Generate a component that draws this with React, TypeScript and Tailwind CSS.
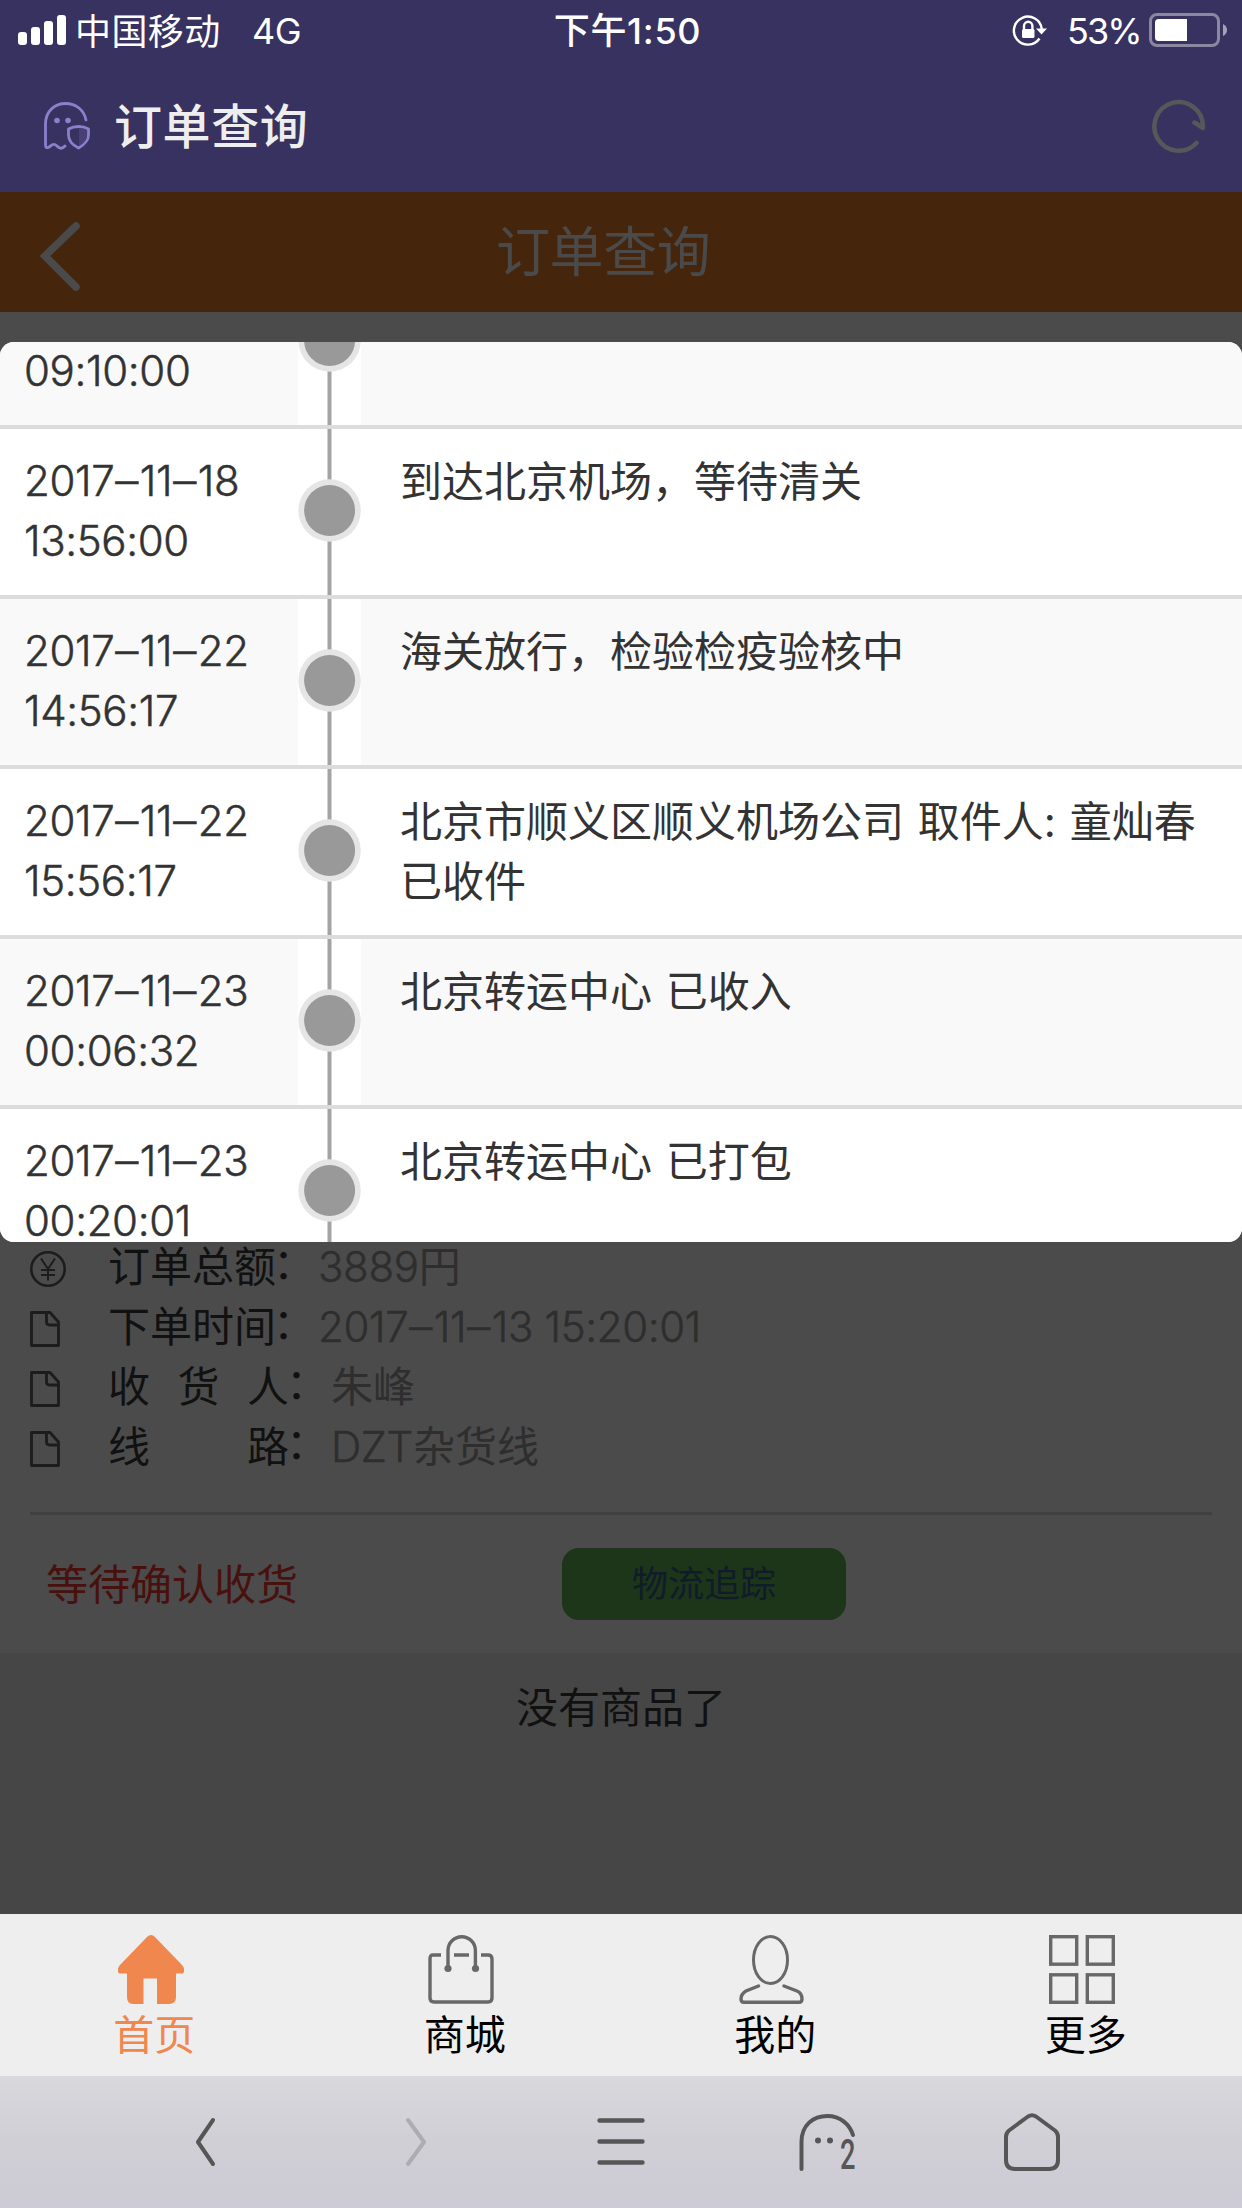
import React from "react";

const SANS = "font-['Inter','Noto_Sans_CJK_SC',sans-serif]";

type Step = { date: string; time: string; text: string };

const steps: Step[] = [
  { date: "2017–11–18", time: "13:56:00", text: "到达北京机场，等待清关" },
  { date: "2017–11–22", time: "14:56:17", text: "海关放行，检验检疫验核中" },
  { date: "2017–11–22", time: "15:56:17", text: "北京市顺义区顺义机场公司 取件人: 童灿春 已收件" },
  { date: "2017–11–23", time: "00:06:32", text: "北京转运中心 已收入" },
  { date: "2017–11–23", time: "00:20:01", text: "北京转运中心 已打包" },
];

function StatusBar() {
  return (
    <div className="flex h-[60px] items-center text-[36px] leading-[60px] text-white">
      <div className="flex w-[410px] items-center pl-[18px]">
        <div className="flex h-[30px] items-end gap-1">
          <span className="h-[13px] w-[9px] rounded-[3px] bg-white" />
          <span className="h-[18px] w-[9px] rounded-[3px] bg-white" />
          <span className="h-[24px] w-[9px] rounded-[3px] bg-white" />
          <span className="h-[30px] w-[9px] rounded-[3px] bg-white" />
        </div>
        <span className="ml-[9px] w-[177px] pt-[3px] tracking-[0.4px]">中国移动</span>
        <span className="pt-[2px] tracking-[-0.5px]">4G</span>
      </div>
      <div className="w-[435px] pt-[2px] text-center font-medium tracking-[0.7px]">下午1:50</div>
      <div className="flex flex-1 items-center justify-end pr-[15px]">
        <svg width="36" height="32" viewBox="0 0 36 32" fill="none" stroke="#fff" strokeWidth="2.4">
          <path d="M27.5 24.5A14 14 0 1 1 29.8 15" />
          <path d="M24 14.5h11l-5.500 6z" fill="#fff" stroke="none" />
          <rect x="10" y="15" width="12.500" height="9" rx="1.500" fill="#fff" stroke="none" />
          <path d="M12 15.500v-3.500a4.200 4.200 0 0 1 8.400 0v3.500" />
        </svg>
        <span className="ml-[19px] w-[74px] pt-[2px] tracking-[-1.9px]">53%</span>
        <svg className="ml-[8px]" width="78" height="34" viewBox="0 0 78 34">
          <rect x="1.500" y="1.500" width="68" height="31" rx="6.500" fill="none" stroke="#8b87a3" strokeWidth="3" />
          <path d="M9.500 6H38v22H9.500A3.500 3.500 0 0 1 6 24.500v-15A3.500 3.500 0 0 1 9.500 6z" fill="#fff" />
          <path d="M74 11q4 2 4 6t-4 6z" fill="#a5a2b8" />
        </svg>
      </div>
    </div>
  );
}

function BrowserHeader() {
  return (
    <div className="flex h-[132px] items-center pl-[43px] pr-[36px]">
      <svg width="48" height="50" viewBox="0 0 48 50" fill="none" stroke="#8b80cc" strokeWidth="2.800" strokeLinecap="round" strokeLinejoin="round">
        <path d="M22 45q-4 4.500-8 0q-3.500-3.500-7 .5q-4.500 3-4.500-1.500V23C2.500 10 12 2.500 22.500 2.500C33 2.500 41 9 43 19" />
        <path d="M35.500 25.500q-5.500 0-10 2.500v6q0 8 10 13q10-6 10-13v-6q-4.500-2.500-10-2.500z" />
        <path d="M36 27q5 .5 8 2v5q0 7-8 11z" fill="#494176" stroke="none" />
        <circle cx="14" cy="19.500" r="2.800" fill="#8b80cc" stroke="none" />
        <circle cx="25" cy="19.500" r="2.800" fill="#8b80cc" stroke="none" />
      </svg>
      <h1 className="ml-[23px] flex-1 pt-[2px] text-[48px] font-medium leading-[60px] tracking-[0.6px] text-[#eeeeee]">订单查询</h1>
      <svg width="56" height="56" viewBox="0 0 56 56" fill="none" stroke="#575759" strokeWidth="4.500" strokeLinecap="round" strokeLinejoin="round">
        <path d="M46.500 45A24.300 24.300 0 1 1 53 27.500V30L44.500 24.500" />
      </svg>
    </div>
  );
}

function PageTitle() {
  return (
    <div className="flex h-[120px] items-center bg-[#45260d] pl-[38px]">
      <svg className="mt-[8px]" width="44" height="72" viewBox="0 0 44 72" fill="none" stroke="#4a4a4a" strokeWidth="7.500" strokeLinecap="round">
        <path d="M38 6L7 36L38 67" />
      </svg>
      <h2 className="ml-[414px] pt-px text-[54px] leading-[60px] tracking-[-0.4px] text-[#4a4a4a]">订单查询</h2>
    </div>
  );
}

/** Latin digits with wide dashes, as used in dates and times. */
function Stamp({ value }: { value: string }) {
  return (
    <span className="font-light tracking-[-0.35px] [-webkit-text-stroke:0.5px_currentColor]">
      {value.split(/(–)/).map((part, i) =>
        part === "–" ? (
          <span key={i} className="inline-block w-[25.500px] scale-x-110 text-center tracking-normal">
            –
          </span>
        ) : (
          part
        ),
      )}
    </span>
  );
}

function Node() {
  return (
    <svg className="shrink-0 bg-white" width="63" height="166" viewBox="0 0 63 166">
      <rect x="29.500" y="0" width="4" height="166" fill="#a3a3a3" />
      <circle cx="31.600" cy="81.500" r="31.200" fill="#e5e5e5" />
      <circle cx="31.600" cy="81.500" r="25.500" fill="#999999" />
    </svg>
  );
}

function StepRow({ step, shaded }: { step: Step; shaded: boolean }) {
  return (
    <li className={"flex h-[170px] shrink-0 border-b-4 border-[#dcdcdc] " + (shaded ? "bg-[#f9f9f9]" : "bg-white")}>
      <div className="w-[298px] shrink-0 whitespace-nowrap pl-[24px] pt-[22px]">
        <div>
          <Stamp value={step.date} />
        </div>
        <div>
          <Stamp value={step.time} />
        </div>
      </div>
      <Node />
      <div className="w-[845px] pl-[39px] pt-[23px] [word-spacing:2px]">{step.text}</div>
    </li>
  );
}

function TrackingCard() {
  return (
    <ul className="flex h-[900px] flex-col overflow-hidden rounded-[14px] bg-white text-[42px] leading-[60px] text-[#333333]">
      <li className="flex h-[87px] shrink-0 items-end overflow-hidden border-b-4 border-[#dcdcdc] bg-[#f9f9f9]">
        <div className="w-[298px] shrink-0 pb-[24px] pl-[24px]">
          <Stamp value="09:10:00" />
        </div>
        <Node />
      </li>
      {steps.map((step, i) => (
        <StepRow key={i} step={step} shaded={i % 2 === 1} />
      ))}
    </ul>
  );
}

function YenIcon() {
  return (
    <svg width="38" height="38" viewBox="0 0 38 38" fill="none" stroke="#1c1c1c" strokeWidth="2.600">
      <circle cx="18" cy="19" r="16.700" />
      <path d="M11 8.500l7 10.500l7-10.500M18 19v11.500M11 20h14M11 25h14" strokeWidth="2" />
    </svg>
  );
}

function FileIcon() {
  return (
    <svg width="32" height="38" viewBox="0 0 32 38" fill="none" stroke="#1c1c1c" strokeWidth="2.800" strokeLinejoin="round">
      <path d="M1.500 2.500H20L28.500 12V35.500H1.500zM16.500 2.500V12q0 3 3 3H28.500" />
    </svg>
  );
}

function DetailRow({ icon, chars, wide, children }: { icon: React.ReactNode; chars: string[]; wide?: boolean; children: React.ReactNode }) {
  return (
    <div className="flex h-[60px] items-center">
      <div className="flex w-[78px] pt-[6px]">{icon}</div>
      <div className={"flex justify-between pt-[2px] " + (wide ? "w-[181px]" : "w-[168px]")}>
        {chars.map((c) => (
          <span key={c}>{c}</span>
        ))}
      </div>
      <span className="-ml-[3px] -mt-[4px] w-[45px]">：</span>
      <span className="pt-px text-[#2e2e2e]">{children}</span>
    </div>
  );
}

function OrderDetails() {
  return (
    <div className="h-[411px] bg-[#4b4b4b] px-[30px] text-[42px] leading-[60px] text-[#111111]">
      <div className="-mt-[6px] pb-[36px]">
        <DetailRow icon={<YenIcon />} chars={["订", "单", "总", "额"]}>
          <Stamp value="3889" />円
        </DetailRow>
        <DetailRow icon={<FileIcon />} chars={["下", "单", "时", "间"]}>
          <Stamp value="2017–11–13 15:20:01" />
        </DetailRow>
        <DetailRow icon={<FileIcon />} chars={["收", "货", "人"]} wide>
          朱峰
        </DetailRow>
        <DetailRow icon={<FileIcon />} chars={["线", "路"]} wide>
          <Stamp value="DZT" />杂货线
        </DetailRow>
      </div>
      <div className="flex h-[108px] items-end border-t-[3px] border-[#404040] pl-[16px]">
        <span className="mb-[5px] w-[516px] text-[#48110d]">等待确认收货</span>
        <button className="h-[72px] w-[284px] rounded-[17px] bg-[#1d3519] text-[36px] leading-[73px] text-[#101c2a]">物流追踪</button>
      </div>
    </div>
  );
}

function TabBar() {
  const line = { fill: "none", stroke: "#686868", strokeWidth: 3.4 };
  const tabs = [
    {
      label: "首页",
      color: "text-[#f0874f]",
      icon: (
        <path d="M29 2Q33 -2 37 2L64 30Q68 35 65 38.500H58V62Q58 69 51 69H39V43.500H25.500V69H15Q9 69 9 62V38.500H1Q-2 35 2 30z" fill="#f0874f" />
      ),
    },
    {
      label: "商城",
      color: "text-black",
      icon: (
        <g {...line}>
          <path d="M13 20H5Q2 20 2 24V63Q2 67 6 67H60Q64 67 64 63V24Q64 20 60 20H53M26 20H41" />
          <path d="M20 33V15.500a13.700 13.700 0 0 1 27.400 0V33" />
          <circle cx="20" cy="33.500" r="3.600" fill="#686868" stroke="none" />
          <circle cx="47.500" cy="33.500" r="3.600" fill="#686868" stroke="none" />
        </g>
      ),
    },
    {
      label: "我的",
      color: "text-black",
      icon: (
        <g {...line} strokeLinecap="round">
          <ellipse cx="31.500" cy="25" rx="17" ry="23.500" strokeWidth="3" />
          <path d="M19.500 51L7 56Q2 59 2 64Q2 67.300 5 67.300H60Q63 67.300 63 64Q63 58 58 56L45 51" />
        </g>
      ),
    },
    {
      label: "更多",
      color: "text-black",
      icon: (
        <g {...line}>
          <rect x="1.700" y="1.700" width="26" height="27.500" />
          <rect x="38.300" y="1.700" width="26" height="27.500" />
          <rect x="1.700" y="39.800" width="26" height="27.500" />
          <rect x="38.300" y="39.800" width="26" height="27.500" />
        </g>
      ),
    },
  ];
  return (
    <nav className="grid h-[162px] grid-cols-4 bg-[#eeeeee] text-[41px] leading-[60px]">
      {tabs.map((t) => (
        <div key={t.label} className="flex flex-col items-center pt-[21px]">
          <svg className="mr-[9px] shrink-0" width="66" height="69" viewBox="0 0 66 69">
            {t.icon}
          </svg>
          <span className={"mr-[2px] pt-[1px] " + t.color}>{t.label}</span>
        </div>
      ))}
    </nav>
  );
}

function BrowserBar() {
  return (
    <div className="flex h-[132px] items-center bg-linear-to-b from-[#d9d8dd] via-[#d0cfd6] to-[#cccad4]">
      <svg className="ml-[193px]" width="24" height="52" viewBox="0 0 24 52" fill="none" stroke="#565656" strokeWidth="4" strokeLinecap="round" strokeLinejoin="round">
        <path d="M20 4L5 26L20 48" />
      </svg>
      <svg className="ml-[187px]" width="24" height="52" viewBox="0 0 24 52" fill="none" stroke="#adacb0" strokeWidth="4" strokeLinecap="round" strokeLinejoin="round">
        <path d="M4 4L20 26L4 48" />
      </svg>
      <svg className="ml-[167px]" width="52" height="52" viewBox="0 0 52 52" stroke="#565656" strokeWidth="4.400" strokeLinecap="round">
        <path d="M4.500 4.500H47.500M4.500 25.500H47.500M4.500 46.500H47.500" />
      </svg>
      <div className="ml-[150px] flex w-[66px]">
        <svg className="shrink-0 overflow-visible" width="62" height="60" viewBox="0 0 62 60" fill="none" stroke="#565656" strokeWidth="4" strokeLinecap="round">
          <path d="M4.500 57V30C4.500 13 16 4 30.500 4C43 4 52.500 12 56 23" />
          <ellipse cx="21" cy="28.500" rx="3" ry="3" fill="#565656" stroke="none" />
          <ellipse cx="33" cy="28.500" rx="3" ry="3" fill="#565656" stroke="none" />
          <text x="43" y="57" fontSize="43" fontFamily="Roboto" fontWeight="500" textLength="15.500" lengthAdjust="spacingAndGlyphs" fill="#565656" stroke="none">2</text>
        </svg>
      </div>
      <svg className="ml-[139px]" width="60" height="60" viewBox="0 0 60 60" fill="none" stroke="#565656" strokeWidth="4" strokeLinejoin="round">
        <path d="M26 4.500Q30 2 34 4.500L53 18.500Q56 21 56 25V48Q56 57 47 57H13Q4 57 4 48V25Q4 21 7 18.500z" />
      </svg>
    </div>
  );
}

export default function App() {
  return (
    <main className={"flex h-[2208px] w-[1242px] flex-col overflow-hidden " + SANS}>
      <header className="bg-[#37325f]">
        <StatusBar />
        <BrowserHeader />
      </header>
      <PageTitle />
      <section className="bg-[#4b4b4b] pt-[30px]">
        <TrackingCard />
      </section>
      <OrderDetails />
      <div className="h-[261px] bg-[#464646] pt-[25px] text-center text-[42px] leading-[60px] text-[#111111]">没有商品了</div>
      <TabBar />
      <BrowserBar />
    </main>
  );
}
